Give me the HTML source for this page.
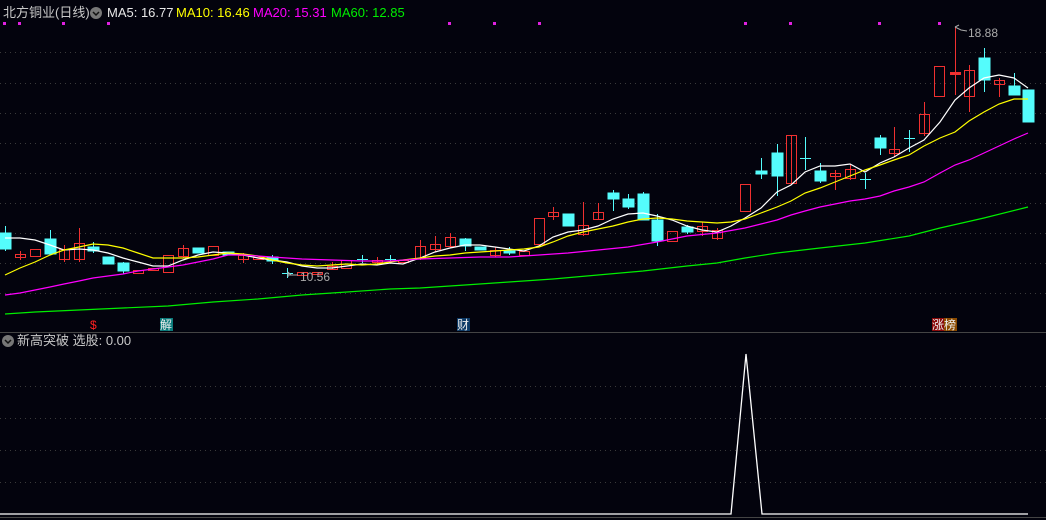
<!DOCTYPE html>
<html><head><meta charset="utf-8"><style>
body{margin:0;background:#03030d;width:1046px;height:520px;overflow:hidden;font-family:"Liberation Sans","Noto Sans CJK SC",sans-serif}
svg{position:absolute;left:0;top:0}
.t{position:absolute;font-size:13px;white-space:nowrap;line-height:14px}
</style></head><body>
<svg width="1046" height="520" xmlns="http://www.w3.org/2000/svg">
<g stroke="#3a3a3a" stroke-dasharray="1 4" stroke-width="1">
<line x1="0" x2="1046" y1="52.5" y2="52.5"/><line x1="0" x2="1046" y1="83.5" y2="83.5"/><line x1="0" x2="1046" y1="113.5" y2="113.5"/><line x1="0" x2="1046" y1="143.5" y2="143.5"/><line x1="0" x2="1046" y1="173.5" y2="173.5"/><line x1="0" x2="1046" y1="203.5" y2="203.5"/><line x1="0" x2="1046" y1="233.5" y2="233.5"/><line x1="0" x2="1046" y1="263.5" y2="263.5"/><line x1="0" x2="1046" y1="293.5" y2="293.5"/>
<line x1="0" x2="1046" y1="386.5" y2="386.5"/><line x1="0" x2="1046" y1="418.5" y2="418.5"/><line x1="0" x2="1046" y1="450.5" y2="450.5"/><line x1="0" x2="1046" y1="482.5" y2="482.5"/>
</g>
<line x1="0" x2="1046" y1="332.5" y2="332.5" stroke="#444"/>
<line x1="0" x2="1046" y1="517.5" y2="517.5" stroke="#444"/>
<g fill="#e020e0">
<rect x="3" y="22" width="3" height="3"/><rect x="18" y="22" width="3" height="3"/><rect x="62" y="22" width="3" height="3"/><rect x="107" y="22" width="3" height="3"/><rect x="448" y="22" width="3" height="3"/><rect x="493" y="22" width="3" height="3"/><rect x="538" y="22" width="3" height="3"/><rect x="744" y="22" width="3" height="3"/><rect x="789" y="22" width="3" height="3"/><rect x="878" y="22" width="3" height="3"/><rect x="938" y="22" width="3" height="3"/>
</g>
<g id="c" stroke-width="1">
<!-- cyan filled candles: x,top,bot,hi,lo -->
<g fill="#54fcfc" stroke="#54fcfc">
<line x1="5.5" x2="5.5" y1="226" y2="251"/><rect x="0" y="233" width="11" height="16"/>
<line x1="50.5" x2="50.5" y1="230" y2="254"/><rect x="45" y="239" width="11" height="15"/>
<line x1="93.5" x2="93.5" y1="242" y2="253"/><rect x="88" y="247" width="11" height="4"/>
<rect x="103" y="257" width="11" height="7"/>
<line x1="123.5" x2="123.5" y1="262" y2="274"/><rect x="118" y="263" width="11" height="8"/>
<rect x="193" y="248" width="11" height="5"/>
<rect x="223" y="252" width="11" height="3"/>
<line x1="272.5" x2="272.5" y1="255" y2="264"/><rect x="267" y="257" width="11" height="4"/>
<line x1="287.5" x2="287.5" y1="268" y2="278"/><line x1="282" x2="293" y1="273.5" y2="273.5"/>
<line x1="362.5" x2="362.5" y1="255" y2="263"/><line x1="357" x2="368" y1="259.5" y2="259.5"/>
<line x1="390.5" x2="390.5" y1="255" y2="263"/><line x1="385" x2="396" y1="259.5" y2="259.5"/>
<line x1="465.5" x2="465.5" y1="238" y2="251"/><rect x="460" y="239" width="11" height="7"/>
<rect x="475" y="247" width="11" height="3"/>
<line x1="509.5" x2="509.5" y1="247" y2="255"/><rect x="504" y="251" width="11" height="2"/>
<rect x="563" y="214" width="11" height="12"/>
<line x1="613.5" x2="613.5" y1="190" y2="211"/><rect x="608" y="193" width="11" height="6"/>
<line x1="628.5" x2="628.5" y1="194" y2="209"/><rect x="623" y="199" width="11" height="8"/>
<line x1="643.5" x2="643.5" y1="192" y2="220"/><rect x="638" y="194" width="11" height="26"/>
<line x1="657.5" x2="657.5" y1="214" y2="246"/><rect x="652" y="220" width="11" height="21"/>
<line x1="687.5" x2="687.5" y1="225" y2="234"/><rect x="682" y="227" width="11" height="5"/>
<line x1="761.5" x2="761.5" y1="158" y2="179"/><rect x="756" y="171" width="11" height="3"/>
<line x1="777.5" x2="777.5" y1="144" y2="196"/><rect x="772" y="153" width="11" height="23"/>
<line x1="805.5" x2="805.5" y1="137" y2="170"/><line x1="800" x2="811" y1="158.5" y2="158.5"/>
<line x1="820.5" x2="820.5" y1="163" y2="183"/><rect x="815" y="171" width="11" height="10"/>
<line x1="865.5" x2="865.5" y1="173" y2="189"/><line x1="860" x2="871" y1="179.5" y2="179.5"/>
<line x1="880.5" x2="880.5" y1="135" y2="155"/><rect x="875" y="138" width="11" height="10"/>
<line x1="909.5" x2="909.5" y1="130" y2="152"/><line x1="904" x2="915" y1="138.5" y2="138.5"/>
<line x1="984.5" x2="984.5" y1="48" y2="92"/><rect x="979" y="58" width="11" height="22"/>
<line x1="1014.5" x2="1014.5" y1="73" y2="95"/><rect x="1009" y="86" width="11" height="9"/>
<rect x="1023" y="90" width="11" height="32"/>
</g>
<g fill="none" stroke="#f03030">
<line x1="20.5" x2="20.5" y1="251" y2="260"/><rect x="15.5" y="254.5" width="10" height="3"/>
<rect x="30.5" y="249.5" width="10" height="7"/>
<line x1="64.5" x2="64.5" y1="245" y2="262"/><rect x="59.5" y="249.5" width="10" height="10"/>
<line x1="79.5" x2="79.5" y1="228" y2="262"/><rect x="74.5" y="243.5" width="10" height="16"/>
<rect x="133.5" y="270.5" width="10" height="3"/>
<rect x="148.5" y="268.5" width="10" height="2"/>
<rect x="163.5" y="255.5" width="10" height="17"/>
<line x1="183.5" x2="183.5" y1="245" y2="258"/><rect x="178.5" y="248.5" width="10" height="8"/>
<rect x="208.5" y="246.5" width="10" height="9"/>
<line x1="243.5" x2="243.5" y1="253" y2="263"/><rect x="238.5" y="255.5" width="10" height="4"/>
<rect x="253.5" y="257.5" width="10" height="2"/>
<rect x="297.5" y="272.5" width="10" height="3"/>
<rect x="312.5" y="272.5" width="10" height="2"/>
<line x1="332.5" x2="332.5" y1="262" y2="270"/><rect x="327.5" y="266.5" width="10" height="3"/>
<rect x="341.5" y="260.5" width="10" height="8"/>
<line x1="377.5" x2="377.5" y1="257" y2="264"/><rect x="372.5" y="260.5" width="10" height="2"/>
<rect x="398.5" y="260.5" width="10" height="2"/>
<line x1="420.5" x2="420.5" y1="240" y2="260"/><rect x="415.5" y="246.5" width="10" height="12"/>
<line x1="435.5" x2="435.5" y1="236" y2="252"/><rect x="430.5" y="244.5" width="10" height="5"/>
<line x1="450.5" x2="450.5" y1="233" y2="248"/><rect x="445.5" y="237.5" width="10" height="9"/>
<line x1="495.5" x2="495.5" y1="247" y2="257"/><rect x="490.5" y="250.5" width="10" height="5"/>
<rect x="519.5" y="251.5" width="10" height="4"/>
<rect x="534.5" y="218.5" width="10" height="26"/>
<line x1="553.5" x2="553.5" y1="207" y2="220"/><rect x="548.5" y="212.5" width="10" height="4"/>
<line x1="583.5" x2="583.5" y1="202" y2="236"/><rect x="578.5" y="225.5" width="10" height="9"/>
<line x1="598.5" x2="598.5" y1="203" y2="220"/><rect x="593.5" y="212.5" width="10" height="7"/>
<rect x="667.5" y="231.5" width="10" height="10"/>
<line x1="702.5" x2="702.5" y1="222" y2="236"/><rect x="697.5" y="226.5" width="10" height="5"/>
<line x1="717.5" x2="717.5" y1="228" y2="240"/><rect x="712.5" y="230.5" width="10" height="8"/>
<rect x="740.5" y="184.5" width="10" height="27"/>
<line x1="791.5" x2="791.5" y1="135" y2="185"/><rect x="786.5" y="135.5" width="10" height="48"/>
<line x1="835.5" x2="835.5" y1="170" y2="190"/><rect x="830.5" y="173.5" width="10" height="3"/>
<line x1="850.5" x2="850.5" y1="164" y2="180"/><rect x="845.5" y="169.5" width="10" height="9"/>
<line x1="894.5" x2="894.5" y1="127" y2="157"/><rect x="889.5" y="149.5" width="10" height="4"/>
<line x1="924.5" x2="924.5" y1="102" y2="136"/><rect x="919.5" y="114.5" width="10" height="19"/>
<rect x="934.5" y="66.5" width="10" height="30"/>
<line x1="955.5" x2="955.5" y1="27" y2="95"/><rect x="950.5" y="72.5" width="10" height="2" fill="#f03030"/>
<line x1="969.5" x2="969.5" y1="65" y2="112"/><rect x="964.5" y="70.5" width="10" height="26"/>
<line x1="999.5" x2="999.5" y1="78" y2="97"/><rect x="994.5" y="80.5" width="10" height="4"/>
</g>
</g>
<g fill="none" stroke-width="1.2">
<polyline stroke="#ffffff" points="5,238 20,238 35,240 50,245 64,250 79,249 93,250 108,253 123,258 138,262 153,266 168,266 183,260 198,255 213,252 228,253 243,255 258,258 272,260 287,262 302,266 317,268 332,268 347,266 362,264 377,265 390,263 403,264 420,258 435,252 450,248 465,245 480,245 495,247 509,249 524,251 539,246 553,237 568,232 583,230 598,226 613,219 628,214 643,213 657,216 672,220 687,226 702,230 717,232 731,226 745,218 761,208 777,192 791,185 805,172 820,166 835,166 850,164 865,172 880,163 894,157 909,148 924,140 940,122 955,100 969,88 984,78 999,75 1014,78 1028,88"/>
<polyline stroke="#ffff00" points="5,275 20,268 35,262 50,255 64,250 79,247 93,244 108,245 123,248 138,253 153,258 168,258 183,258 198,257 213,255 228,253 243,254 258,256 272,260 287,263 302,265 317,266 332,265 347,264 362,265 377,264 403,260 420,258 435,256 450,255 465,253 480,252 495,251 509,250 524,249 539,247 553,242 568,236 583,232 598,229 613,226 628,222 643,219 657,218 672,219 687,221 702,222 717,223 731,222 745,219 761,213 777,207 791,201 805,193 820,188 835,182 850,176 865,170 880,165 894,160 909,155 924,146 940,138 955,132 969,121 984,112 999,104 1014,99 1028,99"/>
<polyline stroke="#ff00ff" points="5,295 20,293 35,290 50,287 64,284 79,281 93,278 108,276 123,274 138,271 153,269 168,267 183,265 198,262 213,259 228,255 243,255 258,256 272,257 302,259 332,260 362,261 390,261 420,259 450,258 480,257 509,257 539,255 568,253 598,250 628,247 657,242 687,236 717,233 745,228 761,224 777,220 791,215 805,211 820,207 835,204 850,201 865,199 880,196 894,191 909,187 924,182 940,173 955,165 969,160 984,153 999,146 1014,139 1028,133"/>
<polyline stroke="#00ee00" points="5,314 20,313 35,312 79,310 123,308 168,306 213,302 258,299 302,295 347,292 390,289 420,288 465,285 509,282 553,279 598,275 643,271 687,266 717,263 745,258 777,253 820,248 865,243 909,236 940,228 984,218 1028,207"/>
</g>
<g stroke="#aaa" fill="none"><path d="M955 27 l4 -2 M955 27 l6 3 l6 1"/><path d="M291 275 l-3 -3 M288 272 l0 5 M288 275 h10"/></g>
<text x="968" y="37" fill="#aaaaaa" font-size="12" font-family="Liberation Sans">18.88</text>
<text x="300" y="281" fill="#aaaaaa" font-size="12" font-family="Liberation Sans">10.56</text>
<polyline fill="none" stroke="#fff" stroke-width="1.3" points="0,514 731,514 746,354 762,514 1028,514"/>
<circle cx="96" cy="13" r="6" fill="#777"/><path d="M93 12 l3 3 l3 -3" stroke="#111" stroke-width="1.5" fill="none"/>
<circle cx="8" cy="341" r="6" fill="#777"/><path d="M5 340 l3 3 l3 -3" stroke="#111" stroke-width="1.5" fill="none"/>
<rect x="160" y="318" width="13" height="13" fill="#0a7a7a"/>
<rect x="457" y="318" width="13" height="13" fill="#0d3a66"/>
<rect x="932" y="318" width="12" height="13" fill="#8a0a0a"/><rect x="944" y="318" width="13" height="13" fill="#8a4a00"/>
</svg>
<div class="t" style="left:3px;top:6px;color:#c8c8c8">北方铜业(日线)</div>
<div class="t" style="left:107px;top:6px;color:#e8e8e8">MA5: 16.77</div>
<div class="t" style="left:176px;top:6px;color:#ffff00">MA10: 16.46</div>
<div class="t" style="left:253px;top:6px;color:#ff00ff">MA20: 15.31</div>
<div class="t" style="left:331px;top:6px;color:#00ee00">MA60: 12.85</div>
<div class="t" style="left:90px;top:318px;color:#ff2020;font-size:12px">$</div>
<div class="t" style="left:160px;top:318px;color:#eee;font-size:12px">解</div>
<div class="t" style="left:457px;top:318px;color:#eee;font-size:12px">财</div>
<div class="t" style="left:932px;top:318px;color:#eee;font-size:12px">涨榜</div>
<div class="t" style="left:17px;top:334px;color:#c8c8c8">新高突破 选股: 0.00</div>
</body></html>
